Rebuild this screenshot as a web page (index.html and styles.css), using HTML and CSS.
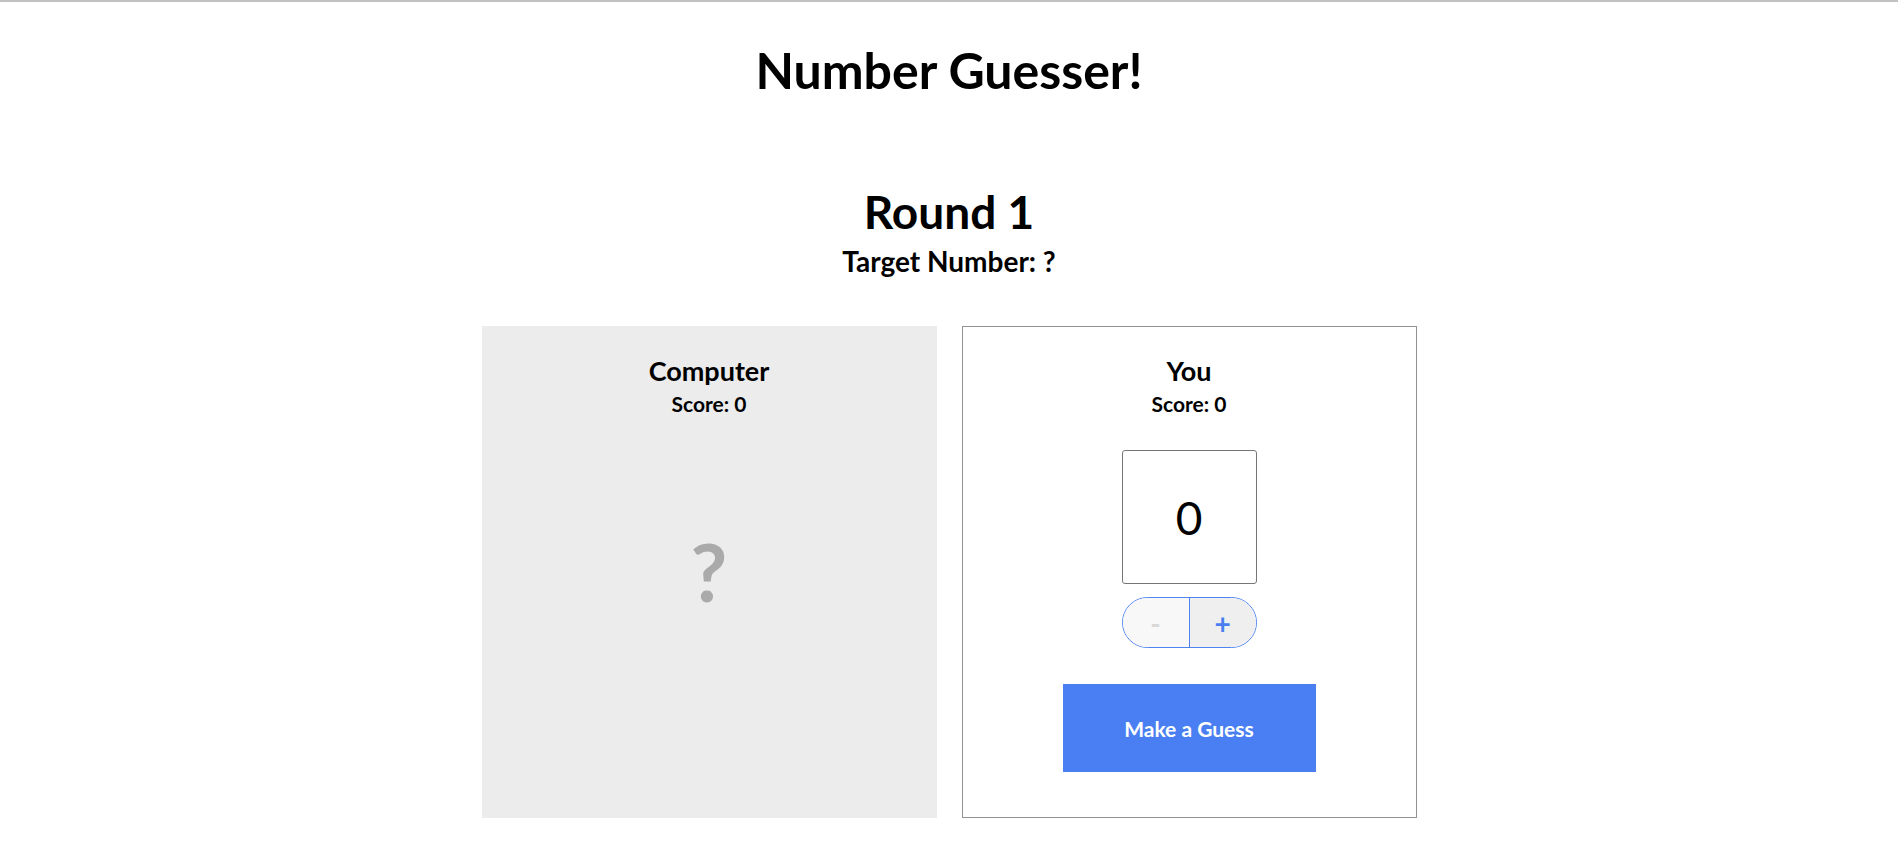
FILE: index.html
```html
<!DOCTYPE html>
<html lang="en">
<head>
    <meta charset="UTF-8">
    <meta name="viewport" content="width=device-width, initial-scale=1.0">
    <title>Number Guesser</title>
    <link rel="stylesheet" href="styles.css">
</head>
<body>
    <h1 class="title">Number Guesser!</h1>

    <div class="round-info">
        <h2 class="round">Round <span class="round-number">1</span></h2>
        <h3 class="target">Target Number: <span class="target-number">?</span></h3>
    </div>

    <div class="players">
        <div class="player computer">
            <h3 class="player-name">Computer</h3>
            <p class="score">Score: <span class="computer-score">0</span></p>
            <div class="computer-guess">
                <span class="guess-mark">?</span>
            </div>
        </div>

        <div class="player human">
            <h3 class="player-name">You</h3>
            <p class="score">Score: <span class="human-score">0</span></p>
            <input class="guess-input" type="text" value="0">
            <div class="stepper">
                <button class="step minus" disabled>-</button>
                <button class="step plus">+</button>
            </div>
            <button class="guess-button">Make a Guess</button>
        </div>
    </div>
</body>
</html>
```

FILE: styles.css
```css
html {
  border-top: 2px solid #c1c1c1;
}

body {
  margin: 0;
  font-family: "Lato", "Noto Sans", sans-serif;
  color: #000;
  background-color: #fff;
  text-align: center;
}

h1, h2, h3, p {
  margin: 0;
  line-height: 1.2;
}

.title {
  margin-top: 38px;
  font-size: 50px;
  font-weight: 700;
}

.round-info {
  margin-top: 84px;
}

.round {
  font-size: 46px;
  font-weight: 700;
}

.target {
  margin-top: 6px;
  font-size: 28px;
  font-weight: 700;
}

.players {
  display: flex;
  justify-content: center;
  gap: 25px;
  margin-top: 47px;
}

.player {
  width: 455px;
  box-sizing: border-box;
  display: flex;
  flex-direction: column;
  align-items: center;
  padding-top: 29px;
}

.computer {
  background-color: #ececec;
  padding-bottom: 93px;
}

.human {
  border: 1px solid #929292;
  padding-top: 28px;
  padding-bottom: 45px;
}

.player-name {
  font-size: 27px;
  font-weight: 700;
}

.score {
  margin-top: 4px;
  font-size: 21px;
  font-weight: 700;
}

.computer-guess {
  flex: 1;
  display: flex;
  align-items: center;
  justify-content: center;
}

.guess-mark {
  font-size: 80px;
  font-weight: 700;
  line-height: 1.2;
  color: #aaaaaa;
}

.guess-input {
  margin-top: 34px;
  width: 135px;
  height: 134px;
  box-sizing: border-box;
  border: 1px solid #767676;
  border-radius: 3px;
  padding: 0;
  font-family: "Lato", "Noto Sans", sans-serif;
  font-size: 46px;
  text-align: center;
  color: #000;
}

.stepper {
  margin-top: 13px;
  width: 135px;
  height: 51px;
  box-sizing: border-box;
  display: flex;
  border: 1px solid #4f83f1;
  border-radius: 26px;
  overflow: hidden;
}

.step {
  flex: 1;
  border: none;
  padding: 0;
  font-family: "Lato", "Noto Sans", sans-serif;
  font-size: 28px;
  font-weight: 700;
}

.minus {
  background-color: #f8f8f8;
  color: #d9d9d9;
  border-right: 1px solid #4f83f1;
}

.plus {
  background-color: #efefef;
  color: #4a7ef2;
}

.guess-button {
  margin-top: 36px;
  width: 253px;
  height: 88px;
  border: none;
  background-color: #4a7ff3;
  color: #fff;
  font-family: "Lato", "Noto Sans", sans-serif;
  font-size: 21px;
  font-weight: 700;
}
```
